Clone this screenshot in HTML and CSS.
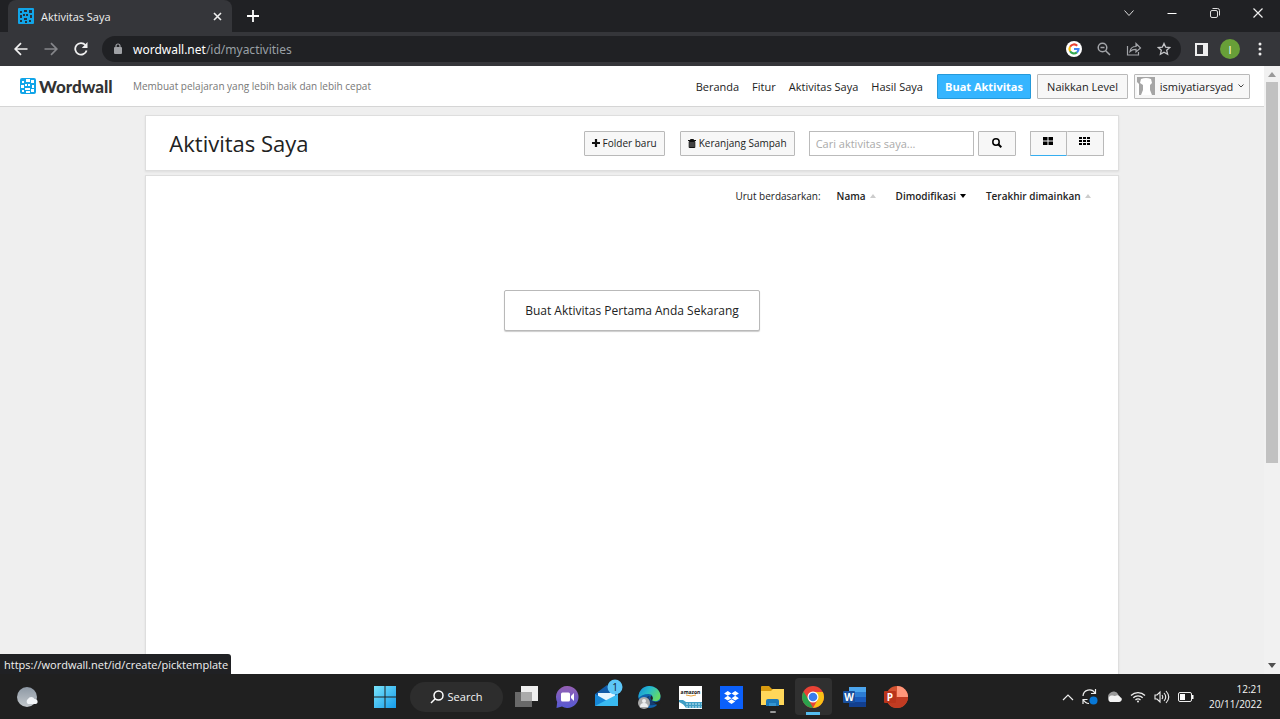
FILE: index.html
```html
<!DOCTYPE html>
<html lang="id">
<head>
<meta charset="utf-8">
<title>Aktivitas Saya</title>
<link rel="stylesheet" href="styles.css">
</head>
<body>
<div class="tabbar">
  <div class="tab">
    <svg class="favicon" width="16" height="16" viewBox="0 0 16 16"><rect width="16" height="16" rx="1" fill="#12a5e8"/><path fill="#26323c" d="M2 3h2v2H2zM6 2h3v2H6zM11 2h3v3h-3zM5 6h2v2H5zM8 6h2v2H8zM2 7h2v3H2zM12 7h2v3h-2zM6 10h3v2H6zM11 12h2v2h-2zM7 13h2v2H7zM2 12h2v2H2z"/></svg>
    <span class="tab-title">Aktivitas Saya</span>
    <button class="plain" aria-label="Tutup tab"><svg width="9" height="9" viewBox="0 0 9 9"><path d="M1 1l7 7M8 1L1 8" stroke="#eee" stroke-width="1.6"/></svg></button>
  </div>
  <button class="plain new-tab" aria-label="Tab baru"><svg width="12" height="12" viewBox="0 0 12 12"><path d="M6 0v12M0 6h12" stroke="#fff" stroke-width="1.8"/></svg></button>
  <div class="window-buttons">
    <button class="plain" aria-label="Cari tab"><svg width="12" height="12" viewBox="0 0 12 12"><path d="M1.500 3.500L6 8.500l4.500-5" fill="none" stroke="#ddd"/></svg></button>
    <button class="plain" aria-label="Minimalkan"><svg width="12" height="12" viewBox="0 0 12 12"><path d="M1.500 6.500h9" stroke="#fff"/></svg></button>
    <button class="plain" aria-label="Pulihkan"><svg width="12" height="12" viewBox="0 0 12 12"><g fill="none" stroke="#ddd"><rect x="1.500" y="3.500" width="7" height="7" rx="1.500"/><path d="M3.500 1.500h5a2 2 0 0 1 2 2v5"/></g></svg></button>
    <button class="plain" aria-label="Tutup"><svg width="12" height="12" viewBox="0 0 12 12"><path d="M1.500 1.500l9 9M10.500 1.500l-9 9" stroke="#eee" stroke-width="1.200"/></svg></button>
  </div>
</div>
<div class="toolbar">
  <button class="plain" aria-label="Kembali"><svg width="14" height="14" viewBox="0 0 14 14"><path d="M13.500 7H1.500M7 1.200L1.200 7 7 12.800" fill="none" stroke="#f1f1f1" stroke-width="1.700"/></svg></button>
  <button class="plain" aria-label="Maju"><svg width="14" height="14" viewBox="0 0 14 14"><path d="M.5 7h12M7 1.200L12.800 7 7 12.800" fill="none" stroke="#85868a" stroke-width="1.700"/></svg></button>
  <button class="plain" aria-label="Muat ulang"><svg width="14" height="14" viewBox="0 0 14 14"><path d="M12.600 8.500A5.800 5.800 0 1 1 11.400 3" fill="none" stroke="#f1f1f1" stroke-width="1.800"/><path d="M13.500 0v6H7.800z" fill="#f1f1f1"/></svg></button>
  <div class="address">
    <svg width="8" height="12" viewBox="0 0 8 12"><rect y="4" width="8" height="7" rx="1" fill="#9fa1a5"/><path d="M2 5V3a2 2 0 0 1 4 0v2" fill="none" stroke="#9fa1a5" stroke-width="1.200"/></svg>
    <span class="url"><b>wordwall.net</b>/id/myactivities</span>
    <svg width="16" height="16" viewBox="0 0 16 16"><circle cx="8" cy="8" r="8" fill="#fff"/><g fill="none" stroke-width="2.200"><path d="M11.200 4.800A4.500 4.500 0 0 0 4.100 5.750" stroke="#ea4335"/><path d="M4.100 5.750a4.500 4.500 0 0 0 0 4.500" stroke="#fbbc05"/><path d="M4.100 10.250a4.500 4.500 0 0 0 6.800 1.200" stroke="#34a853"/><path d="M10.900 11.450A4.500 4.500 0 0 0 12.500 8H8" stroke="#4285f4"/></g></svg>
    <svg width="14" height="14" viewBox="0 0 14 14" fill="none" stroke="#a3a5a9" stroke-width="1.500"><circle cx="5.500" cy="5.500" r="4.300"/><path d="M8.700 8.700L13 13M3.500 5.500h4"/></svg>
    <svg width="16" height="14" viewBox="0 0 16 14" fill="none" stroke="#a3a5a9" stroke-width="1.200"><path d="M1.500 4v9h11v-3"/><path d="M4 9.500c.5-3.500 2.500-5 6-5V1.500L14.500 6 10 10V7.300C7.500 7.200 5.700 7.800 4 9.500z"/></svg>
    <svg width="14" height="14" viewBox="0 0 14 14"><path d="M7 1.500l1.700 3.700 4 .4-3 2.700.9 4L7 10.200l-3.600 2.100.9-4-3-2.700 4-.4z" fill="none" stroke="#c5c6c9" stroke-width="1.300"/></svg>
  </div>
  <button class="plain panel-button" aria-label="Panel samping"><svg width="13" height="13" viewBox="0 0 13 13"><path d="M1 1h11v11H1z" fill="none" stroke="#eee" stroke-width="2"/><path d="M8 1h4v11H8z" fill="#eee"/></svg></button>
  <button class="plain profile" aria-label="Profil">I</button>
  <button class="plain" aria-label="Menu"><svg width="4" height="14" viewBox="0 0 4 14" fill="#eee"><circle cx="2" cy="2" r="1.500"/><circle cx="2" cy="7" r="1.500"/><circle cx="2" cy="12" r="1.500"/></svg></button>
</div>
<div class="viewport">
  <div class="page">
    <header class="site-header">
      <a class="logo" href="#"><svg width="16" height="16" viewBox="0 0 16 16"><rect width="16" height="16" rx="2" fill="#12a5e8"/><path fill="#fff" d="M2 3h2v2H2zM6 1h4v3H6zM11 2h3v3h-3zM5 6h2v2H5zM8 6h2v2H8zM1 7h3v3H1zM12 7h2v3h-2zM5 10h5v2H5zM11 11h3v3h-3zM6 13h4v2H6zM2 12h2v2H2z"/></svg><span>Wordwall</span></a>
      <span class="tagline">Membuat pelajaran yang lebih baik dan lebih cepat</span>
      <nav class="nav">
        <a href="#">Beranda</a><a href="#">Fitur</a><a href="#">Aktivitas Saya</a><a href="#">Hasil Saya</a>
      </nav>
      <div class="account">
        <button class="btn create">Buat Aktivitas</button>
        <button class="btn upgrade">Naikkan Level</button>
        <button class="btn user"><svg width="18" height="18" viewBox="0 0 18 18"><path fill="#a5a5a5" d="M0 0h18v18H0z"/><path fill="#fff" d="M4 2q5-2 10 0l1 4-2 2v5l2 5H4l2-5V8L3 6zM0 5l2 2v11H0z"/></svg><span>ismiyatiarsyad</span><svg width="6" height="4" viewBox="0 0 6 4"><path d="M.5.500L3 3 5.500.5" fill="none" stroke="#444"/></svg></button>
      </div>
    </header>
    <main class="content">
      <section class="panel heading">
        <h1>Aktivitas Saya</h1>
        <button class="btn small folder"><svg width="8" height="8" viewBox="0 0 8 8"><path d="M4 0v8M0 4h8" stroke="#111" stroke-width="2.200"/></svg>Folder baru</button>
        <button class="btn small trash"><svg width="8" height="9" viewBox="0 0 8 9"><path d="M0 1.500h8M2.500 1V.5h3V1" stroke="#111" fill="none"/><path d="M1.200 2.500v6h5.600v-6zM3 3v5M5 3v5" fill="#777" stroke="#111"/></svg>Keranjang Sampah</button>
        <form class="search">
          <input type="text" aria-label="Cari aktivitas saya" placeholder="Cari aktivitas saya...">
          <button type="button" class="btn find" aria-label="Cari"><svg width="10" height="10" viewBox="0 0 10 10" fill="none" stroke="#000"><circle cx="4" cy="4" r="3.200" stroke-width="1.500"/><path d="M6.300 6.300L9.300 9.300" stroke-width="2"/></svg></button>
        </form>
        <div class="views">
          <button class="btn view selected" aria-label="Kisi besar"><svg width="10" height="8" viewBox="0 0 10 8"><path d="M0 0h4.500v3.500H0zM5.500 0H10v3.500H5.500zM0 4.500h4.500V8H0zM5.500 4.500H10V8H5.500z"/></svg></button>
          <button class="btn view" aria-label="Kisi kecil"><svg width="11" height="8" viewBox="0 0 11 8"><path d="M0 0h3v2H0zM4 0h3v2H4zM8 0h3v2H8zM0 3h3v2H0zM4 3h3v2H4zM8 3h3v2H8zM0 6h3v2H0zM4 6h3v2H4zM8 6h3v2H8z"/></svg></button>
        </div>
      </section>
      <section class="panel list">
        <div class="sort">
          <span>Urut berdasarkan:</span>
          <button class="plain sort-key">Nama<svg width="6" height="4" viewBox="0 0 6 4"><path d="M0 4l3-4 3 4z" fill="#ccc"/></svg></button>
          <button class="plain sort-key">Dimodifikasi<svg width="6" height="4" viewBox="0 0 6 4"><path d="M0 0h6L3 4z"/></svg></button>
          <button class="plain sort-key">Terakhir dimainkan<svg width="6" height="4" viewBox="0 0 6 4"><path d="M0 4l3-4 3 4z" fill="#ccc"/></svg></button>
        </div>
        <button class="btn first">Buat Aktivitas Pertama Anda Sekarang</button>
      </section>
    </main>
  </div>
  <div class="scrollbar">
    <svg width="8" height="5" viewBox="0 0 8 5"><path d="M0 5l4-5 4 5z" fill="#999"/></svg>
    <div class="thumb"></div>
    <svg width="8" height="5" viewBox="0 0 8 5"><path d="M0 0h8L4 5z" fill="#505050"/></svg>
  </div>
  <div class="status">https://wordwall.net/id/create/picktemplate</div>
</div>
<footer class="taskbar">
  <div class="side">
    <svg width="24" height="24" viewBox="0 0 24 24"><defs><linearGradient id="moon" x2="0" y2="1"><stop stop-color="#8d98a4"/><stop offset="1" stop-color="#c3c8cc"/></linearGradient></defs><circle cx="12" cy="12" r="10" fill="url(#moon)"/><path d="M13 19a3 3 0 0 1 0-5 3.700 3.700 0 0 1 6.500 0c4 0 4 5 1 5z" fill="#f1f4f7"/></svg>
  </div>
  <div class="apps">
    <svg class="app start" width="24" height="24" viewBox="0 0 24 24"><defs><linearGradient id="win" x2="1" y2="1"><stop stop-color="#79e4fb"/><stop offset="1" stop-color="#159bea"/></linearGradient></defs><path fill="url(#win)" d="M1 1h10.500v10.500H1zM12.500 1H23v10.500H12.500zM1 12.500h10.500V23H1zM12.500 12.500H23V23H12.500z"/></svg>
    <button class="plain task-search"><svg width="14" height="14" viewBox="0 0 14 14" fill="none" stroke="#fff" stroke-width="1.500"><circle cx="8.500" cy="5.500" r="4.500"/><path d="M5.200 8.800L1 13"/></svg>Search</button>
    <svg class="app" width="24" height="24" viewBox="0 0 24 24"><path d="M7 1h17v15H7z" fill="#eee"/><path d="M1 7h17v15H1z" fill="#777" fill-opacity=".85"/><path d="M7 7h11v9H7z" fill="#aaa"/></svg>
    <svg class="app" width="24" height="24" viewBox="0 0 24 24"><defs><linearGradient id="chat" x2="0" y2="1"><stop stop-color="#9560b3"/><stop offset="1" stop-color="#5659d3"/></linearGradient></defs><path d="M12 1a11 11 0 1 1-5 20.500L1.500 23l.7-6A11 11 0 0 1 12 1z" fill="url(#chat)"/><rect x="6" y="7.500" width="9" height="9" rx="1.500" fill="#fff"/><path d="M16 11l3-3v8l-3-3z" fill="#fff"/></svg>
    <svg class="app mail" width="30" height="32" viewBox="0 0 30 32"><path d="M2 15L14 6l11 9v12H2z" fill="#125ba7"/><path d="M5 14h17v8H5z" fill="#e5f5ff"/><path d="M2 15l14 8L2 27z" fill="#1686d6"/><path d="M25 15v12H2z" fill="#39b9f0"/><circle cx="22" cy="8" r="7.500" fill="#5dc6f8"/><text x="22" y="12" text-anchor="middle" class="badge-text">1</text></svg>
    <svg class="app" width="24" height="24" viewBox="0 0 24 24"><defs><linearGradient id="edge" x2="1" y2=".5"><stop stop-color="#1689d8"/><stop offset=".5" stop-color="#27bcca"/><stop offset="1" stop-color="#64d968"/></linearGradient></defs><circle cx="12.500" cy="12" r="11" fill="#0f62ad"/><path d="M1.500 13A11 11 0 0 1 23.500 11c0 6-7 6-9 4 2-3 1-6-3-6-5 0-8 2-10 4z" fill="url(#edge)"/><path d="M14.500 15q-3-1-2-4-3 0-4 4c0 4 4 6 8 5 3 0 5-2 6-4-3 1-6 1-8-1z" fill="#143c70"/><path d="M15 15.500q-3-2-.5-5Q17 13 15 15.500zM16 17q4 1.500 7.500-2l1 2-3 4z" fill="#202020"/><circle cx="7" cy="18" r="6" fill="#aaa"/><circle cx="7" cy="16" r="2" fill="#eee"/><path d="M3 22q0-4 4-4t4 4z" fill="#eee"/></svg>
    <svg class="app" width="24" height="24" viewBox="0 0 24 24"><path fill="#fff" d="M1 1h23v23H1z"/><text x="12.500" y="9" text-anchor="middle" class="amazon-text">amazon</text><path d="M8 10q5 2 10 0" stroke="#e9a13b" fill="none"/><path d="M1 15h4l3 2h16v6H8q-2-4-7-6z" fill="#3f9ec5"/><path d="M8 19h16M8 22h16" stroke="#cce8f2" stroke-dasharray="2 1"/></svg>
    <svg class="app" width="24" height="24" viewBox="0 0 24 24"><path fill="#0b60fb" d="M1 1h23v23H1z"/><path fill="#fff" d="M8.800 6l3.700 2.400-3.700 2.400-3.700-2.400zM16.200 6l3.700 2.400-3.700 2.400-3.700-2.400zM8.800 10.800l3.700 2.400-3.700 2.400-3.700-2.400zM16.200 10.800l3.700 2.400-3.700 2.400-3.700-2.400zM12.500 14.300l3.700 2.300-3.700 2.400-3.700-2.400z"/></svg>
    <svg class="app explorer" width="24" height="32" viewBox="0 0 24 32"><path d="M1 6q0-1 1-1h7l3 3h11v6H1z" fill="#d99b0f"/><path d="M1 10h10l2-2h11v16H1z" fill="#ffd75a"/><path d="M6 25v-5q0-2 2-2h9q2 0 2 2v5z" fill="#1b78b9"/><path d="M9 25v-3h7v3z" fill="#3495d1"/><rect x="10" y="30" width="6" height="2" rx="1" fill="#999"/></svg>
    <div class="active-app"><svg width="24" height="24" viewBox="0 0 24 24"><circle cx="12" cy="12" r="11" fill="#e94235"/><path d="M2.500 6.500l5 8L12 23A11 11 0 0 1 2.500 6.500z" fill="#2ba24c"/><path d="M12 7h9.800A11 11 0 0 1 12 23l4.500-8z" fill="#fbc116"/><circle cx="12" cy="12" r="5.500" fill="#fff"/><circle cx="12" cy="12" r="4.300" fill="#3b7ded"/></svg></div>
    <svg class="app" width="24" height="24" viewBox="0 0 24 24"><path d="M6 2h17v5H6z" fill="#4ca5ed"/><path d="M6 7h17v6H6z" fill="#2c7cd4"/><path d="M6 12h17v5H6z" fill="#195abd"/><path d="M6 17h17v5H6z" fill="#123f8f"/><rect y="6" width="12" height="12" rx="1" fill="#194f9d"/><text x="6" y="16" text-anchor="middle" class="office-text">W</text></svg>
    <svg class="app" width="24" height="24" viewBox="0 0 24 24"><circle cx="13" cy="12" r="11" fill="#d35230"/><path d="M13 1a11 11 0 0 1 11 11H13z" fill="#ff967a"/><path d="M2 12h22a11 11 0 0 1-22 0z" fill="#c13b22"/><rect y="6" width="12" height="12" rx="1" fill="#b9341b"/><text x="6" y="16" text-anchor="middle" class="office-text">P</text></svg>
  </div>
  <div class="side tray">
    <svg width="12" height="8" viewBox="0 0 12 8"><path d="M1 7l5-5 5 5" fill="none" stroke="#eee" stroke-width="1.200"/></svg>
    <svg width="16" height="16" viewBox="0 0 16 16"><path d="M1 7a6.500 6.500 0 0 1 12-3M13.500 0v4.500H9M1 15v-4.500h4.500M1.500 11A6.500 6.500 0 0 0 7 14.500" fill="none" stroke="#eee" stroke-width="1.200"/><circle cx="11.500" cy="11.500" r="4" fill="#0878d7"/></svg>
    <svg width="16" height="11" viewBox="0 0 16 11"><path d="M3 8a4 4 0 0 1 1-6 5 5 0 0 1 8 1l2 5z" fill="#999"/><path d="M4 11a3.500 3.500 0 0 1 0-6c2-1 4 0 5 0 3-2 5 0 5 1 3 1 2 5-1 5z" fill="#f2f2f2"/></svg>
    <svg width="16" height="12" viewBox="0 0 16 12" fill="none" stroke="#eee" stroke-width="1.300"><path d="M1 4.500a10 10 0 0 1 14 0M3.300 6.800a6.500 6.500 0 0 1 9.400 0M5.500 9a3.500 3.500 0 0 1 5 0"/><circle cx="8" cy="10.500" r="1" fill="#eee" stroke="none"/></svg>
    <svg width="16" height="14" viewBox="0 0 16 14" fill="none" stroke="#eee" stroke-width="1.100"><path d="M1 5h2l3-3v10L3 9H1zM8 5q1.500 2 0 4M10 3q3.500 4 0 8M12 1q5.500 6 0 12"/></svg>
    <svg width="16" height="10" viewBox="0 0 16 10"><rect x=".5" y=".5" width="13" height="9" rx="1.500" fill="none" stroke="#eee"/><path d="M2 2h5v6H2zM14 3h1.500v4H14z" fill="#fff"/></svg>
    <div class="clock"><span>12:21</span><span>20/11/2022</span></div>
  </div>
</footer>
</body>
</html>
```
FILE: styles.css
```css
* { box-sizing: border-box; }
body {
  margin: 0;
  height: 100vh;
  display: flex;
  flex-direction: column;
  overflow: hidden;
  background: #efefef;
  color: #222;
  font-family: "Open Sans", "Noto Sans", sans-serif;
  font-size: 11px;
}
button, input { font: inherit; color: inherit; }
button { white-space: nowrap; }
svg { display: block; flex: none; }
a { color: inherit; text-decoration: none; }
.plain {
  display: flex;
  align-items: center;
  justify-content: center;
  padding: 0;
  border: 0;
  background: none;
}

.tabbar {
  display: flex;
  align-items: center;
  height: 32px;
  padding-left: 8px;
  background: #202124;
}
.tab {
  display: flex;
  align-items: center;
  align-self: stretch;
  gap: 7px;
  width: 224px;
  padding: 0 10px;
  border-radius: 8px 8px 0 0;
  background: #35363a;
  color: #f0f0f0;
}
.tab-title { flex: 1; }
.new-tab { margin-left: 15px; }
.window-buttons {
  display: flex;
  align-items: center;
  gap: 31px;
  margin-left: auto;
  padding: 0 16px 6px 0;
}
.toolbar {
  display: flex;
  align-items: center;
  gap: 16px;
  height: 34px;
  padding: 0 18px 0 14px;
  background: #35363a;
}
.address {
  flex: 1;
  display: flex;
  align-items: center;
  gap: 15px;
  height: 26px;
  margin: 0 -2px;
  padding: 0 10px 0 12px;
  border-radius: 13px;
  background: #202124;
}
.url { flex: 1; margin-left: -4px; color: #9aa0a6; font-family: "Noto Sans", sans-serif; font-size: 12px; }
.url b { color: #fff; font-weight: 400; }
.panel-button { margin-right: -4px; }
.profile {
  width: 20px;
  height: 20px;
  margin-right: 2px;
  border-radius: 50%;
  background: #689f38;
  color: #fff;
}

.viewport {
  flex: 1;
  display: flex;
  min-height: 0;
  position: relative;
}
.page {
  flex: 1;
  display: flex;
  flex-direction: column;
  overflow: hidden;
}
.site-header {
  display: flex;
  align-items: center;
  height: 41px;
  padding: 0 14px 0 20px;
  border-bottom: 1px solid #d5d5d5;
  background: #fff;
}
.logo {
  display: flex;
  align-items: center;
  gap: 3px;
  width: 113px;
  color: #333;
  font-size: 17px;
  font-weight: 900;
  font-family: Lato, sans-serif;
}
.tagline { color: #777; font-size: 10px; }
.nav { display: flex; gap: 13px; margin-left: auto; }
.account { display: flex; gap: 6px; margin-left: 14px; }
.btn {
  display: flex;
  align-items: center;
  justify-content: center;
  height: 25px;
  padding: 0;
  border: 1px solid #b9b9b9;
  border-radius: 1px;
  background: #f7f7f7;
}
.create {
  width: 94px;
  border-color: #2599d9;
  background: #35b5ff;
  color: #fff;
  font-weight: 700;
}
.upgrade { width: 91px; }
.user { gap: 5px; width: 116px; padding: 0 5px 0 2px; }

.content {
  flex: 1;
  display: flex;
  flex-direction: column;
  gap: 4px;
  width: 77%;
  margin: 8px auto 0;
}
.panel {
  border: 1px solid #dedede;
  background: #fff;
  box-shadow: 0 1px 2px #ddd;
}
.heading {
  display: flex;
  align-items: center;
  height: 56px;
  padding: 0 14px 0 23px;
}
h1 { flex: 1; margin: 0; font-size: 22px; font-weight: 500; line-height: 28px; }
.small { gap: 3px; font-size: 10px; }
.folder { width: 81px; margin-right: 15px; }
.trash { width: 115px; margin-right: 14px; }
.search { display: flex; gap: 4px; margin-right: 14px; }
.search input {
  width: 165px;
  height: 25px;
  padding: 0 6px;
  border: 1px solid #bbb;
  background: #fff;
}
.search input::placeholder { color: #aaa; }
.find { width: 38px; }
.views { display: flex; }
.view { width: 37px; padding-bottom: 4px; }
.view + .view { border-left: 0; }
.view.selected { border-bottom-color: #35aef0; }
.list { flex: 1; border-bottom: 0; }
.sort {
  display: flex;
  justify-content: flex-end;
  align-items: center;
  gap: 20px;
  height: 40px;
  padding-right: 27px;
  font-size: 10px;
}
.sort > span { margin-right: -4px; }
.sort-key { gap: 4px; font-weight: 600; }
.first {
  height: 41px;
  margin: 74px auto 0;
  padding: 0 20px;
  background: #fff;
  border-radius: 2px;
  box-shadow: 0 1px 1px #ccc;
  font-size: 12px;
}
.scrollbar {
  display: flex;
  flex-direction: column;
  align-items: center;
  width: 16px;
  padding: 6px 0;
  background: #f1f1f1;
}
.thumb { width: 12px; height: 64%; margin: 5px 0 auto; background: #c1c1c1; }
.status {
  position: absolute;
  left: 0;
  bottom: 0;
  padding: 2px 3px 1px 4px;
  border-top-right-radius: 3px;
  background: #202124;
  color: #f1f1f1;
  line-height: 17px;
}

.taskbar {
  position: relative;
  display: flex;
  align-items: center;
  height: 45px;
  padding: 0 18px 0 15px;
  background: #202020;
  color: #f5f5f5;
}
.side { flex: 1; display: flex; align-items: center; }
.apps { display: flex; align-items: center; gap: 17px; padding-left: 3px; }
.start { margin-right: 2px; }
.task-search {
  gap: 4px;
  width: 93px;
  height: 30px;
  margin: 0 -6px;
  border-radius: 15px;
  background: #2d2d2d;
}
.mail { margin: -4px -3px 0; }
.active-app {
  display: flex;
  align-items: center;
  justify-content: center;
  width: 37px;
  height: 37px;
  margin: 0 -6px;
  border-radius: 4px;
  background: linear-gradient(#55bdf0, #55bdf0) center bottom / 14px 3px no-repeat #303030;
}
.tray { justify-content: flex-end; gap: 8px; }
.clock { display: flex; flex-direction: column; align-items: flex-end; margin-left: 7px; font-size: 10px; line-height: 15px; }
.badge-text { fill: #123; font-size: 10px; }
.amazon-text { fill: #111; font-size: 5px; font-weight: 700; }
.office-text { fill: #fff; font-size: 10px; font-weight: 700; }
```
